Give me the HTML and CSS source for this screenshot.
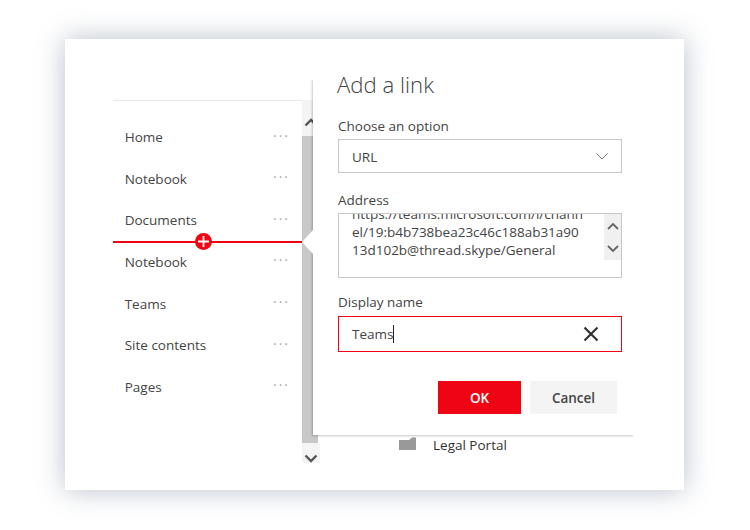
FILE: index.html
```html
<!DOCTYPE html>
<html lang="en">
<head>
<meta charset="utf-8">
<title>Add a link</title>
<link rel="stylesheet" href="styles.css">
</head>
<body>
<main class="card">
  <nav class="nav">
    <ul class="nav-list">
      <li class="nav-item"><span>Home</span><span class="dots">···</span></li>
      <li class="nav-item"><span>Notebook</span><span class="dots">···</span></li>
      <li class="nav-item"><span>Documents</span><span class="dots">···</span></li>
      <li class="nav-item"><span>Notebook</span><span class="dots">···</span></li>
      <li class="nav-item"><span>Teams</span><span class="dots">···</span></li>
      <li class="nav-item"><span>Site contents</span><span class="dots">···</span></li>
      <li class="nav-item"><span>Pages</span><span class="dots">···</span></li>
    </ul>
  </nav>
  <div class="scrollbar">
    <div class="scroll-btn scroll-up">
      <svg width="14" height="9" viewBox="0 0 14 9"><path d="M1.500 7.500 7 2l5.500 5.500" fill="none" stroke="#555" stroke-width="2.400"/></svg>
    </div>
    <div class="scroll-thumb"></div>
    <div class="scroll-btn scroll-down">
      <svg width="14" height="9" viewBox="0 0 14 9"><path d="M1.500 1.500 7 7l5.500-5.500" fill="none" stroke="#555" stroke-width="2.400"/></svg>
    </div>
  </div>
  <div class="behind">
    <svg class="folder" width="17" height="13" viewBox="0 0 17 13"><path d="M0 3h10l3-2.500h4V13H0z" fill="#999"/></svg>
    <span>Legal Portal</span>
  </div>

  <div class="insert-line">
    <span class="insert-plus">
      <svg width="17" height="17" viewBox="0 0 17 17"><circle cx="8.500" cy="8.500" r="8.500" fill="#ee0412"/><path d="M8.500 3v11M3 8.500h11" stroke="#fff" stroke-width="1.800"/></svg>
    </span>
  </div>

  <section class="panel">
    <svg class="notch" width="11" height="24" viewBox="0 0 11 24"><path d="M11 0 0 12l11 12z" fill="#fff"/></svg>
    <h1 class="title">Add a link</h1>
    <label class="label label-first">Choose an option</label>
    <div class="select">
      <span>URL</span>
      <svg width="12" height="7" viewBox="0 0 12 7"><path d="M.5.500 6 6 11.500.500" fill="none" stroke="#777" stroke-width="1"/></svg>
    </div>
    <label class="label label-address">Address</label>
    <div class="textarea">
      <div class="textarea-text">
        <div>https://teams.microsoft.com/l/chann</div>
        <div>el/19:b4b738bea23c46c188ab31a90</div>
        <div>13d102b@thread.skype/General</div>
      </div>
      <div class="textarea-scroll">
        <svg width="12" height="8" viewBox="0 0 12 8"><path d="M1 7l5-5 5 5" fill="none" stroke="#666" stroke-width="1.800"/></svg>
        <svg width="12" height="8" viewBox="0 0 12 8"><path d="M1 1l5 5 5-5" fill="none" stroke="#666" stroke-width="1.800"/></svg>
      </div>
    </div>
    <label class="label label-display">Display name</label>
    <div class="input">
      <span class="input-value">Teams</span>
      <svg width="16" height="16" viewBox="0 0 16 16"><path d="M1.500 1.500l13 13M14.500 1.500l-13 13" fill="none" stroke="#333" stroke-width="2.200"/></svg>
    </div>
    <div class="actions">
      <button class="btn btn-primary" type="button">OK</button>
      <button class="btn btn-secondary" type="button">Cancel</button>
    </div>
  </section>
</main>
</body>
</html>
```
FILE: styles.css
```css
* { box-sizing: border-box; }

html, body { margin: 0; height: 100%; }

body {
  background: #fff;
  padding: 39px 0 0 65px;
  font-family: "Open Sans", "Noto Sans", "Liberation Sans", sans-serif;
  font-size: 13.500px;
  color: #444;
  overflow: hidden;
}

.card {
  position: relative;
  display: flex;
  align-items: flex-start;
  width: 619px;
  height: 451px;
  padding: 61px 0 0 48px;
  background: #fff;
  box-shadow: 0 0 26px rgba(85, 105, 130, .42);
}

.nav {
  width: 189px;
  flex: none;
  border-top: 1px solid #e8e8e8;
  padding-top: 15.200px;
}

.nav-list { list-style: none; margin: 0; padding: 0; }

.nav-item {
  display: flex;
  align-items: center;
  justify-content: space-between;
  height: 41.670px;
  padding: 0 14px 0 11.700px;
}

.dots {
  color: #aaa;
  font-size: 14px;
  letter-spacing: 2px;
  line-height: 1;
  margin-top: -3px;
  margin-right: -2px;
}

.scrollbar {
  width: 18px;
  flex: none;
  height: 363px;
  display: flex;
  flex-direction: column;
}

.scroll-btn {
  background: #f4f4f4;
  display: flex;
  justify-content: center;
}

.scroll-up { height: 36px; padding-top: 18px; }
.scroll-down { height: 20px; padding-top: 11px; }
.scroll-thumb { flex: 1; background: #c8c8c8; margin-right: 2px; }

.behind {
  display: flex;
  align-items: center;
  gap: 17px;
  margin: 336px 0 0 79px;
  color: #333;
  line-height: 19px;
}

.folder { margin-top: -4px; }

.insert-line {
  position: absolute;
  left: 48px;
  top: 202px;
  width: 189px;
  height: 2px;
  background: #ee0412;
}

.insert-plus {
  position: absolute;
  left: 82px;
  top: -8px;
  line-height: 0;
}

.panel {
  position: absolute;
  z-index: 1;
  left: 248px;
  top: 40px;
  width: 321px;
  height: 356px;
  padding: 0 12px 0 25px;
}

.panel::before {
  content: "";
  position: absolute;
  z-index: -1;
  inset: 0;
  background: #fff;
  box-shadow: -1px 1px 2px rgba(0, 0, 0, .22);
  clip-path: inset(0 0 -10px -10px);
}

.notch { position: absolute; left: -11px; top: 151px; }

.title {
  margin: -10px 0 0 -1px;
  font-size: 22.200px;
  font-weight: 300;
  line-height: 32px;
  color: #444;
}

.label { display: block; line-height: 18px; color: #444; }
.label-first { margin-top: 16px; }
.label-address { margin-top: 18px; }
.label-display { margin-top: 15px; }

.select {
  display: flex;
  align-items: center;
  justify-content: space-between;
  height: 34px;
  margin-top: 4px;
  padding: 1px 13px 0;
  border: 1px solid #c8c8c8;
}

.textarea {
  position: relative;
  display: flex;
  height: 65px;
  margin-top: 4px;
  border: 1px solid #c8c8c8;
  overflow: hidden;
}

.textarea-text {
  flex: 1;
  margin-top: -9px;
  padding-left: 13px;
  line-height: 18px;
  white-space: nowrap;
  overflow: hidden;
}

.textarea-scroll {
  flex: none;
  width: 17px;
  height: 46px;
  background: #f0f0f0;
  display: flex;
  flex-direction: column;
  align-items: center;
  justify-content: center;
  gap: 15px;
}

.input {
  display: flex;
  align-items: center;
  justify-content: space-between;
  height: 36px;
  margin-top: 5px;
  padding: 0 22px 0 13px;
  border: 1px solid #ee0412;
}

.input-value { border-right: 1px solid #222; line-height: 18px; }

.actions {
  display: flex;
  gap: 9px;
  margin: 29px 0 0 100px;
}

.btn {
  height: 33px;
  border: 0;
  font: 600 13.500px "Open Sans", "Noto Sans", sans-serif;
}

.btn-primary { width: 83px; background: #ee0412; color: #fff; }
.btn-secondary { width: 87px; background: #f4f4f4; color: #444; }
```
